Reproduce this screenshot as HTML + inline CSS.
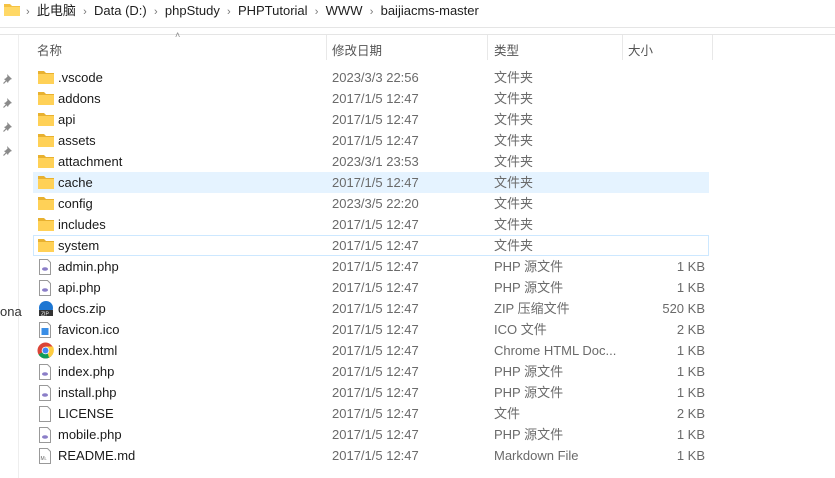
<!DOCTYPE html>
<html><head><meta charset="utf-8"><style>
body{margin:0;width:835px;height:478px;background:#fff;position:relative;overflow:hidden;font-family:"Liberation Sans","Noto Sans CJK SC",sans-serif;font-size:13px;color:#1e1e1e}
.a{position:absolute;white-space:nowrap}
.crumb{top:2px;height:18px;line-height:18px;font-size:13px;color:#1e1e1e}
.sep{color:#777;font-size:11px}
.hl{position:absolute;left:0;width:835px;height:1px;background:#e5e5e5}
.hd{top:40px;color:#555;font-size:12.5px}
.vs{position:absolute;top:35px;width:1px;height:25px;background:#e8e8e8}
.row{position:absolute;left:33px;width:676px;height:21px;line-height:22px}
.row span{position:absolute;top:0}
.n{left:25px;color:#1a1a1a}
.d{left:299px;color:#6a6a6a}
.t{left:461px;color:#6a6a6a}
.s{right:4px;color:#6a6a6a}
.ic{position:absolute;left:5px;top:3px}
.pin{position:absolute;left:3px}
</style></head><body>
<svg class="a" style="left:4px;top:3px" width="16" height="13"><path d="M0 1h6l2 2h8v10H0z" fill="#f5c242"/><path d="M0 4h16v9H0z" fill="#ffd866"/></svg>
<div class="a crumb" style="left:26px"><span class="sep">›</span>&nbsp;&nbsp;此电脑&nbsp;&nbsp;<span class="sep">›</span>&nbsp;&nbsp;Data (D:)&nbsp;&nbsp;<span class="sep">›</span>&nbsp;&nbsp;phpStudy&nbsp;&nbsp;<span class="sep">›</span>&nbsp;&nbsp;PHPTutorial&nbsp;&nbsp;<span class="sep">›</span>&nbsp;&nbsp;WWW&nbsp;&nbsp;<span class="sep">›</span>&nbsp;&nbsp;baijiacms-master</div>
<div class="hl" style="top:27px"></div>
<div class="hl" style="top:34px"></div>
<div class="a" style="left:18px;top:35px;width:1px;height:443px;background:#eee"></div>
<div class="a" style="left:175px;top:30px;font-size:9px;color:#888">˄</div>
<div class="a hd" style="left:37px">名称</div>
<div class="vs" style="left:326px"></div><div class="a hd" style="left:332px">修改日期</div>
<div class="vs" style="left:487px"></div><div class="a hd" style="left:494px">类型</div>
<div class="vs" style="left:622px"></div><div class="a hd" style="left:628px">大小</div>
<div class="vs" style="left:712px"></div>
<div class="a" style="left:0;top:304px;color:#333">ona</div>
<div id="rows"></div>
<script>
var F='<svg class="ic" width="16" height="14"><path d="M0 1h6l2 2h8v11H0z" fill="#e8b130"/><path d="M0 4h16v10H0z" fill="#ffd157"/></svg>';
var P='<svg class="ic" width="14" height="16"><path d="M1.5.5h8l3 3v12h-11z" fill="#fff" stroke="#999"/><ellipse cx="7" cy="10" rx="3" ry="1.8" fill="#8b7ec8"/></svg>';
var L='<svg class="ic" width="14" height="16"><path d="M1.5.5h8l3 3v12h-11z" fill="#fff" stroke="#999"/></svg>';
var Z='<svg class="ic" width="16" height="16"><circle cx="8" cy="7" r="7" fill="#1d76d2"/><rect x="1" y="9" width="14" height="6" fill="#333"/><text x="3" y="14.5" font-size="5" fill="#fff" font-family="Liberation Sans">ZIP</text></svg>';
var I='<svg class="ic" width="14" height="16"><path d="M1.5.5h8l3 3v12h-11z" fill="#fff" stroke="#999"/><rect x="3.5" y="6" width="7" height="7" fill="#3a8ee6"/></svg>';
var C='<svg class="ic" style="left:4px;top:2px" width="17" height="17"><circle cx="8.5" cy="8.5" r="8" fill="#db4437"/><path d="M8.5 8.5L1.6 12.5A8 8 0 0 0 8.5 16.5 8 8 0 0 0 15.4 12.5 8 8 0 0 0 16.5 8.5z" fill="#0f9d58"/><path d="M8.5 4.5h7.5A8 8 0 0 1 12 15.5z" fill="#ffcd40"/><circle cx="8.5" cy="8.5" r="3.8" fill="#fff"/><circle cx="8.5" cy="8.5" r="3" fill="#4285f4"/></svg>';
var M='<svg class="ic" width="14" height="16"><path d="M1.5.5h8l3 3v12h-11z" fill="#fff" stroke="#999"/><text x="2.5" y="12" font-size="5" fill="#666" font-family="Liberation Sans">M↓</text></svg>';
var d=[[F,'.vscode','2023/3/3 22:56','文件夹',''],[F,'addons','2017/1/5 12:47','文件夹',''],[F,'api','2017/1/5 12:47','文件夹',''],[F,'assets','2017/1/5 12:47','文件夹',''],[F,'attachment','2023/3/1 23:53','文件夹',''],[F,'cache','2017/1/5 12:47','文件夹',''],[F,'config','2023/3/5 22:20','文件夹',''],[F,'includes','2017/1/5 12:47','文件夹',''],[F,'system','2017/1/5 12:47','文件夹',''],[P,'admin.php','2017/1/5 12:47','PHP 源文件','1 KB'],[P,'api.php','2017/1/5 12:47','PHP 源文件','1 KB'],[Z,'docs.zip','2017/1/5 12:47','ZIP 压缩文件','520 KB'],[I,'favicon.ico','2017/1/5 12:47','ICO 文件','2 KB'],[C,'index.html','2017/1/5 12:47','Chrome HTML Doc...','1 KB'],[P,'index.php','2017/1/5 12:47','PHP 源文件','1 KB'],[P,'install.php','2017/1/5 12:47','PHP 源文件','1 KB'],[L,'LICENSE','2017/1/5 12:47','文件','2 KB'],[P,'mobile.php','2017/1/5 12:47','PHP 源文件','1 KB'],[M,'README.md','2017/1/5 12:47','Markdown File','1 KB']];
var h='';d.forEach(function(r,i){var st='top:'+(67+21*i)+'px;';if(i==5)st+='background:#e5f3ff;';if(i==8)st+='box-shadow:inset 0 0 0 1px #cde8ff;';h+='<div class="row" style="'+st+'">'+r[0]+'<span class="n">'+r[1]+'</span><span class="d">'+r[2]+'</span><span class="t">'+r[3]+'</span><span class="s">'+r[4]+'</span></div>';});
document.getElementById('rows').innerHTML=h;
var p='';[73,97,121,145].forEach(function(y){p+='<svg class="pin" style="top:'+y+'px" width="10" height="11"><path d="M4 1l5 5-1.5.5-2 2L5 10 1 6l1.5-.5 2-2z" fill="#8a8a8a"/><path d="M3 8L0.5 10.5" stroke="#8a8a8a" stroke-width="1.2"/></svg>'});
document.body.insertAdjacentHTML('beforeend',p);
</script>
</body></html>
